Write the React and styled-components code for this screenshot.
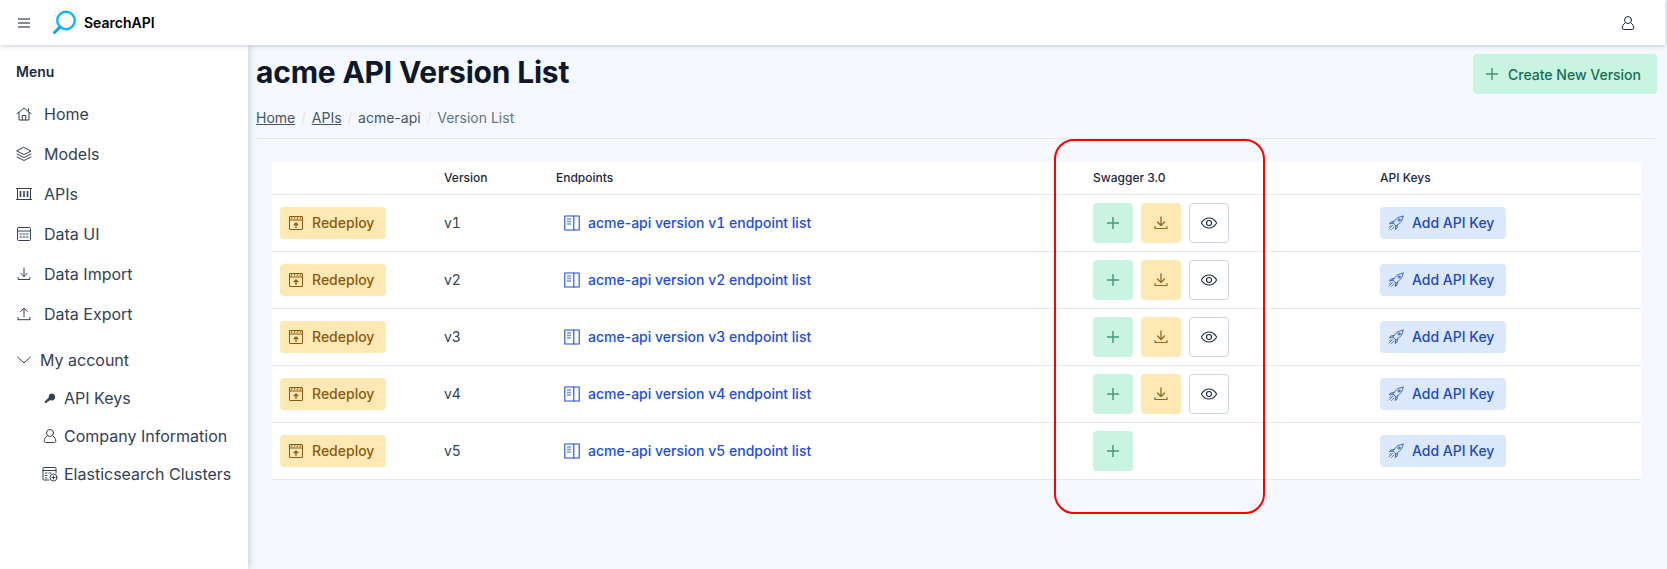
import React from "react";
import styled, { createGlobalStyle } from "styled-components";

const GlobalStyle = createGlobalStyle`
  html, body {
    margin: 0;
    padding: 0;
    height: 100%;
    overflow: hidden;
    background: #f5f8fc;
    font-family: Inter, "Noto Sans", sans-serif;
  }
  #root {
    height: 100%;
  }
  * {
    box-sizing: border-box;
  }
`;

const Page = styled.div`
  position: relative;
  display: flex;
  flex-direction: column;
  width: 1665px;
  height: 569px;
  background: #f5f8fc;
`;

const Header = styled.header`
  position: relative;
  z-index: 3;
  display: flex;
  align-items: center;
  flex: 0 0 45px;
  padding: 0 16px 0 17px;
  background: #fff;
  box-shadow: 0 1px 4px rgba(100, 116, 139, 0.35);
`;

const Burger = styled.svg`
  width: 14px;
  height: 14px;
  margin-right: 20px;
  color: #0f172a;
`;

const Logo = styled.svg`
  width: 26px;
  height: 26px;
  margin-right: 7px;
`;

const Brand = styled.span`
  flex: 1;
  font-size: 14px;
  font-weight: 600;
  color: #000;
`;

const UserButton = styled.svg`
  width: 16px;
  height: 16px;
  margin-right: 13px;
  color: #1e293b;
`;

const Body = styled.div`
  display: flex;
  flex: 1;
  min-height: 0;
`;

const Sidebar = styled.aside`
  position: relative;
  z-index: 2;
  flex: 0 0 248px;
  padding: 18px 16px 0;
  background: #fff;
  box-shadow: 2px 0 6px rgba(100, 116, 139, 0.25);
`;

const MenuTitle = styled.div`
  font-size: 14px;
  font-weight: 600;
  line-height: 18px;
  color: #1e293b;
  margin-bottom: 13px;
`;

const NavItem = styled.div`
  display: flex;
  align-items: center;
  height: 40px;
  gap: 12px;
  font-size: 16px;
  white-space: nowrap;
  color: #334155;
`;

const AccountItem = styled(NavItem)`
  margin-top: 7px;
  gap: 8px;
  height: 38px;
`;

const SubItem = styled(NavItem)`
  height: 38px;
  padding-left: 26px;
  gap: 6px;
`;

const NavIcon = styled.svg`
  flex: 0 0 16px;
  width: 16px;
  height: 16px;
  color: #334155;
`;

const Main = styled.main`
  flex: 1;
  min-width: 0;
  padding: 9px 8px 0;
`;

const TitleRow = styled.div`
  display: flex;
  justify-content: space-between;
  align-items: flex-start;
  height: 49px;
`;

const Title = styled.h1`
  margin: 0;
  font-size: 30px;
  font-weight: 700;
  line-height: 36px;
  letter-spacing: -0.2px;
  color: #0f172a;
`;

const Breadcrumb = styled.nav`
  display: flex;
  align-items: center;
  height: 29px;
  font-size: 14px;
  color: #475569;
`;

const CrumbLink = styled.a`
  color: #475569;
  text-decoration: underline;
`;

const CrumbSep = styled.span`
  margin: 0 5.75px;
  color: #e2e8f0;
`;

const CrumbCurrent = styled.span`
  color: #64748b;
`;

const Divider = styled.hr`
  margin: 6px 0 0;
  border: none;
  height: 1px;
  background: #e2e8f0;
`;

const Card = styled.div`
  margin: 23px 16px 0;
  background: #fff;
`;

const Table = styled.table`
  width: 100%;
  table-layout: fixed;
  border-collapse: collapse;
`;

const HeadCell = styled.th`
  height: 32px;
  padding: 0 8px;
  text-align: left;
  font-size: 12px;
  font-weight: 500;
  color: #1e293b;
  border-bottom: 1px solid #e2e8f0;
`;

const Cell = styled.td`
  height: 57px;
  padding: 0 8px;
  font-size: 14px;
  color: #334155;
  border-bottom: 1px solid #e2e8f0;
`;

const tones = {
  green: { bg: "#c8f4e1", color: "#166f54" },
  yellow: { bg: "#fee9b5", color: "#8a5a10" },
  blue: { bg: "#dbe8fe", color: "#1e4bb8" },
  outline: { bg: "#fff", color: "#1e293b" },
};

const Button = styled.button`
  display: inline-flex;
  align-items: center;
  justify-content: center;
  gap: 8px;
  height: ${(p) => (p.$square ? "40px" : "32px")};
  width: ${(p) => (p.$square ? "40px" : "auto")};
  padding: ${(p) => (p.$square ? "0" : "0 11px 0 7px")};
  border: 1px solid ${(p) => (p.$tone === "outline" ? "#cbd5e1" : "transparent")};
  border-radius: 4px;
  font-family: inherit;
  font-size: 14px;
  font-weight: 500;
  color: ${(p) => tones[p.$tone].color};
  background: ${(p) => tones[p.$tone].bg};
`;

const CreateButton = styled(Button)`
  height: 40px;
  padding: 0 15px 0 10px;
`;

const ButtonIcon = styled.svg`
  width: 16px;
  height: 16px;
  opacity: ${(p) => p.$opacity || 1};
`;

const SwaggerGroup = styled.div`
  display: flex;
  gap: 8px;
`;

const EndpointLink = styled.a`
  display: inline-flex;
  align-items: center;
  gap: 8px;
  padding-left: 8px;
  vertical-align: -3px;
  font-weight: 500;
  color: #1d4ed8;
`;

const VersionName = styled.span`
  font-variant-numeric: tabular-nums;
`;

const Highlight = styled.div`
  position: absolute;
  left: 1054px;
  top: 139px;
  width: 211px;
  height: 375px;
  border: 2px solid #ff0000;
  border-radius: 20px;
  pointer-events: none;
`;

const Svg = ({ as: Comp = NavIcon, children, ...rest }) => (
  <Comp
    viewBox="0 0 16 16"
    fill="none"
    stroke="currentColor"
    strokeWidth="1"
    strokeLinecap="round"
    strokeLinejoin="round"
    {...rest}
  >
    {children}
  </Comp>
);

const icons = {
  home: (
    <>
      <path d="M1 7.8 8 2l7 5.8" />
      <path d="M3 6.5V14h10V6.5" />
      <path d="M6.3 14V9.5h3.4V14" />
      <path d="M12.5 2.6v2" />
    </>
  ),
  layers: (
    <>
      <path d="M8 1.5 15 5l-7 3.5L1 5z" />
      <path d="M1 8l7 3.5L15 8" />
      <path d="M1 11l7 3.5 7-3.5" />
    </>
  ),
  apis: (
    <>
      <path d="M0.5 2.5h15M0.5 13.5h15M1.5 2.5v11M14.5 2.5v11" />
      <path d="M4.5 5v6M8 5v6M11.5 5v6" strokeWidth="1.6" strokeLinecap="butt" />
    </>
  ),
  table: (
    <>
      <rect x="1.5" y="1.5" width="13" height="13" rx="1" />
      <path d="M1.5 5h13" />
      <path d="M4 8h1.5M7 8h2M10.5 8H12M4 11h1.5M7 11h2M10.5 11H12" />
    </>
  ),
  dataImport: (
    <>
      <path d="M8 2v8.500M4.700 7.200 8 10.500l3.300-3.300" />
      <path d="M2.200 11.500v2h11.600v-2" />
    </>
  ),
  download: (
    <>
      <path d="M8 2v8.500M4.500 7 8 10.500 11.500 7" strokeWidth="1.300" />
      <path d="M2 11.500v2h12v-2" strokeWidth="1.200" />
    </>
  ),
  upload: (
    <>
      <path d="M8 11V2.5M4.7 5.5 8 2.2l3.3 3.3" />
      <path d="M2.2 13.7h11.6" />
      <path d="M2.2 11.5v2.2M13.8 11.5v2.2" />
    </>
  ),
  chevron: <path d="M1.5 5 8 11l6.5-6" />,
  user: (
    <>
      <circle cx="8" cy="5" r="3.5" />
      <path d="M5 8c-1.8 1-2.8 3-2.8 5.2 0 .8.4 1.3 1.2 1.3h9.2c.8 0 1.2-.5 1.2-1.3C13.800 11 12.800 9 11 8" />
    </>
  ),
  cluster: (
    <>
      <path d="M7 14H2a1 1 0 0 1-1-1V2.500a1 1 0 0 1 1-1h11a1 1 0 0 1 1 1V7" />
      <path d="M1 4.500h13M3.500 7H5M3.500 9.500H5M3.500 12H5M7 7h2" />
      <circle cx="11.500" cy="11.500" r="3.500" />
      <path d="M11.500 10v3M10 11.500h3" />
    </>
  ),
  plus: <path d="M8 2v12M2 8h12" strokeWidth="1.500" strokeLinecap="butt" />,
  eye: (
    <>
      <path d="M0.300 8C2.200 4.800 5 3 8 3s5.800 1.800 7.700 5c-1.900 3.200-4.700 5-7.700 5S2.200 11.200.3 8z" strokeWidth="1.100" />
      <circle cx="8" cy="8" r="2.500" strokeWidth="1.100" />
    </>
  ),
  redeploy: (
    <>
      <rect x="1.500" y="1.500" width="13" height="13" rx="0.500" />
      <path d="M1.500 5h13" />
      <path d="M3 3.800 4.200 2M6 3.800 7.200 2M9 3.800 10.200 2M12 3.800 13.200 2" />
      <path d="M8 12.500V8M6.200 9.800 8 8l1.800 1.800" strokeWidth="1.300" />
    </>
  ),
  book: (
    <>
      <rect x="0.800" y="1" width="14.400" height="14" strokeWidth="1.100" />
      <path d="M9.800 1v14" strokeWidth="1.100" />
      <path d="M3 4h4M3 6.500h4M3 9h4" strokeWidth="1.400" strokeLinecap="butt" opacity="0.6" />
    </>
  ),
  rocket: (
    <g strokeWidth="0.800">
      <path d="M15 1 9.500 2.800 4.800 7.700l3.500 3.500 4.900-4.700z" />
      <path d="M6 6.500 2.800 7 1.500 8.800l3.800-.6M9.500 10l-.5 3.200-1.800 1.300.6-3.800" />
      <circle cx="11" cy="5" r="1.100" />
      <path d="M4.500 10.500 1 14M6 12l-2.500 2.500M2.800 10.500 1.300 12" strokeDasharray="1.500 0.900" />
    </g>
  ),
};

const navItems = [
  ["Home", "home"],
  ["Models", "layers"],
  ["APIs", "apis"],
  ["Data UI", "table"],
  ["Data Import", "dataImport"],
  ["Data Export", "upload"],
];

const versions = [
  { name: "v1", docs: true },
  { name: "v2", docs: true },
  { name: "v3", docs: true },
  { name: "v4", docs: true },
  { name: "v5", docs: false },
];

const Key = () => (
  <NavIcon viewBox="0 0 16 16" fill="currentColor">
    <path d="M9.500 3.500a3.500 3.500 0 0 1 1.500 6.700c-1 .4-2.100.3-3-.2L6.500 11.500H5.200v1.300L3.800 13H3l-.2-1.600 4-4a3.500 3.500 0 0 1 2.700-3.900z" />
  </NavIcon>
);

const App = () => {
  return (
    <Page>
      <GlobalStyle />
      <Header>
        <Burger viewBox="0 0 14 14" fill="none" stroke="currentColor" strokeWidth="1">
          <path d="M1 3h12M1 7h12M1 11h12" />
        </Burger>
        <Logo viewBox="0 0 26 26" fill="none">
          <circle cx="15" cy="10.500" r="8.800" stroke="#12b5f5" strokeWidth="2.400" />
          <path d="M9 17 3.500 22.500" stroke="#12a4ea" strokeWidth="3" strokeLinecap="round" />
        </Logo>
        <Brand>SearchAPI</Brand>
        <Svg as={UserButton}>{icons.user}</Svg>
      </Header>
      <Body>
        <Sidebar>
          <MenuTitle>Menu</MenuTitle>
          {navItems.map(([label, icon]) => (
            <NavItem key={label}>
              <Svg>{icons[icon]}</Svg>
              {label}
            </NavItem>
          ))}
          <AccountItem>
            <Svg>{icons.chevron}</Svg>
            My account
          </AccountItem>
          <SubItem>
            <Key />
            API Keys
          </SubItem>
          <SubItem>
            <Svg>{icons.user}</Svg>
            Company Information
          </SubItem>
          <SubItem>
            <Svg>{icons.cluster}</Svg>
            Elasticsearch Clusters
          </SubItem>
        </Sidebar>
        <Main>
          <TitleRow>
            <Title>acme API Version List</Title>
            <CreateButton $tone="green">
              <Svg as={ButtonIcon} $opacity={0.7}>{icons.plus}</Svg>
              Create New Version
            </CreateButton>
          </TitleRow>
          <Breadcrumb>
            <CrumbLink>Home</CrumbLink>
            <CrumbSep>/</CrumbSep>
            <CrumbLink>APIs</CrumbLink>
            <CrumbSep>/</CrumbSep>
            acme-api
            <CrumbSep>/</CrumbSep>
            <CrumbCurrent>Version List</CrumbCurrent>
          </Breadcrumb>
          <Divider />
          <Card>
            <Table>
              <colgroup>
                <col width="164" />
                <col width="112" />
                <col width="537" />
                <col width="287" />
                <col width="269" />
              </colgroup>
              <thead>
                <tr>
                  <HeadCell />
                  <HeadCell>Version</HeadCell>
                  <HeadCell>Endpoints</HeadCell>
                  <HeadCell>Swagger 3.0</HeadCell>
                  <HeadCell>API Keys</HeadCell>
                </tr>
              </thead>
              <tbody>
                {versions.map((v) => (
                  <tr key={v.name}>
                    <Cell>
                      <Button $tone="yellow">
                        <Svg as={ButtonIcon}>{icons.redeploy}</Svg>
                        Redeploy
                      </Button>
                    </Cell>
                    <Cell>
                      <VersionName>{v.name}</VersionName>
                    </Cell>
                    <Cell>
                      <EndpointLink>
                        <Svg as={ButtonIcon}>{icons.book}</Svg>
                        <span>
                          acme-api version <VersionName>{v.name}</VersionName> endpoint list
                        </span>
                      </EndpointLink>
                    </Cell>
                    <Cell>
                      <SwaggerGroup>
                        <Button $square $tone="green">
                          <Svg as={ButtonIcon} $opacity={0.7}>{icons.plus}</Svg>
                        </Button>
                        {v.docs && (
                          <>
                            <Button $square $tone="yellow">
                              <Svg as={ButtonIcon} $opacity={0.9}>{icons.download}</Svg>
                            </Button>
                            <Button $square $tone="outline">
                              <Svg as={ButtonIcon}>{icons.eye}</Svg>
                            </Button>
                          </>
                        )}
                      </SwaggerGroup>
                    </Cell>
                    <Cell>
                      <Button $tone="blue">
                        <Svg as={ButtonIcon}>{icons.rocket}</Svg>
                        Add API Key
                      </Button>
                    </Cell>
                  </tr>
                ))}
              </tbody>
            </Table>
          </Card>
        </Main>
      </Body>
      <Highlight />
    </Page>
  );
};

export default App;
